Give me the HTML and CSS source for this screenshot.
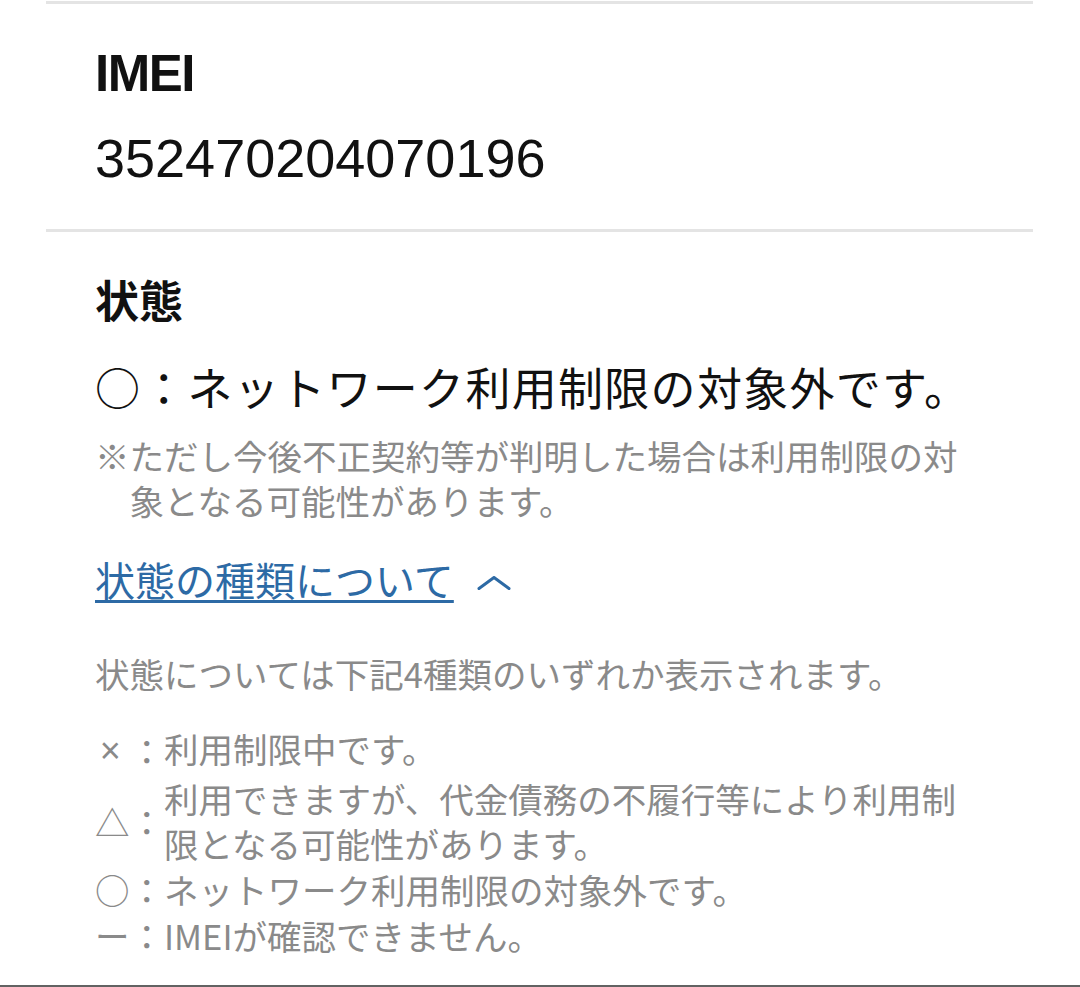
FILE: index.html
```html
<!DOCTYPE html>
<html lang="ja">
<head>
<meta charset="utf-8">
<title>IMEI 状態</title>
<link rel="stylesheet" href="styles.css">
</head>
<body>
<div class="page">
  <div class="panel">
    <section class="item item-first">
      <div class="imei-label">IMEI</div>
      <div class="imei-value">352470204070196</div>
    </section>
    <section class="item item-status">
      <h2 class="status-heading">状態</h2>
      <p class="status-value">○：ネットワーク利用制限の対象外です。</p>
      <p class="status-note">※ただし今後不正契約等が判明した場合は利用制限の対象となる可能性があります。</p>
      <div class="toggle-row">
        <a class="toggle-link" href="#">状態の種類について</a>
        <svg class="chevron" width="34" height="14" viewBox="0 0 34 14" aria-hidden="true"><polyline points="2,12.5 17,1.5 32,12.5" fill="none" stroke="#2d6aa5" stroke-width="3" stroke-linecap="round" stroke-linejoin="round"/></svg>
      </div>
      <p class="types-desc">状態については下記4種類のいずれか表示されます。</p>
      <div class="types-list">
        <span class="sym sym-x">×</span><span class="sym">：</span><span class="txt first-txt">利用制限中です。</span>
        <span class="sym">△</span><span class="sym">：</span><span class="txt">利用できますが、代金債務の不履行等により利用制限となる可能性があります。</span>
        <span class="sym">○</span><span class="sym">：</span><span class="txt">ネットワーク利用制限の対象外です。</span>
        <span class="sym">ー</span><span class="sym">：</span><span class="txt">IMEIが確認できません。</span>
      </div>
    </section>
  </div>
  <div class="bottom-bar"></div>
</div>
</body>
</html>
```
FILE: styles.css
```css
html, body {
  margin: 0;
  padding: 0;
  background: #ffffff;
}

body {
  font-family: "Noto Sans CJK JP", "Liberation Sans", sans-serif;
  color: #111111;
}

.page {
  height: 987px;
  display: flex;
  flex-direction: column;
  overflow: hidden;
}

.panel {
  margin-left: 46px;
  width: 987px;
  margin-top: 1px;
}

.item {
  border-top: 3px solid #e4e4e4;
  padding: 0 49px;
}

.item-first {
  padding-top: 40px;
  padding-bottom: 41px;
}

.imei-label {
  font-family: "Liberation Sans", Arial, sans-serif;
  font-weight: 700;
  font-size: 51px;
  line-height: 60px;
  letter-spacing: -1.5px;
  color: #111111;
}

.imei-value {
  margin-top: 24px;
  font-family: "Liberation Sans", Arial, sans-serif;
  font-size: 54px;
  line-height: 60px;
  color: #111111;
}

.item-status {
  padding-top: 39px;
}

.status-heading {
  margin: 0;
  font-size: 44px;
  line-height: 56px;
  font-weight: 700;
  color: #111111;
}

.status-value {
  margin: 30px 0 0;
  font-size: 45px;
  line-height: 60px;
  letter-spacing: 1.3px;
  color: #111111;
}

.status-note {
  margin: 16px 0 0;
  font-size: 34.5px;
  line-height: 45px;
  color: #8a8a8a;
  padding-left: 1em;
  text-indent: -1em;
}

.toggle-row {
  margin-top: 30px;
  display: flex;
  align-items: flex-start;
  height: 52px;
}

.toggle-link {
  font-size: 40px;
  line-height: 52px;
  color: #2d6aa5;
  text-decoration: underline;
  text-decoration-thickness: 2.5px;
  text-underline-offset: 4px;
}

.chevron {
  margin-left: 23px;
  margin-top: 23px;
  display: block;
}

.types-desc {
  margin: 46px 0 0;
  font-size: 34.5px;
  line-height: 45px;
  color: #8a8a8a;
}

.types-list {
  margin-top: 30px;
  display: grid;
  grid-template-columns: 1em 1em 1fr;
  align-items: center;
  row-gap: 1px;
  font-size: 34.5px;
  line-height: 45px;
  color: #8a8a8a;
}

.sym {
  text-align: center;
}

.sym-x {
  font-family: "Liberation Sans", sans-serif;
  font-size: 36px;
  padding-right: 4px;
}

.first-txt {
  padding-bottom: 4px;
}

.txt {
  display: block;
}

.bottom-bar {
  margin-top: auto;
  height: 2px;
  background: #626262;
}
```
